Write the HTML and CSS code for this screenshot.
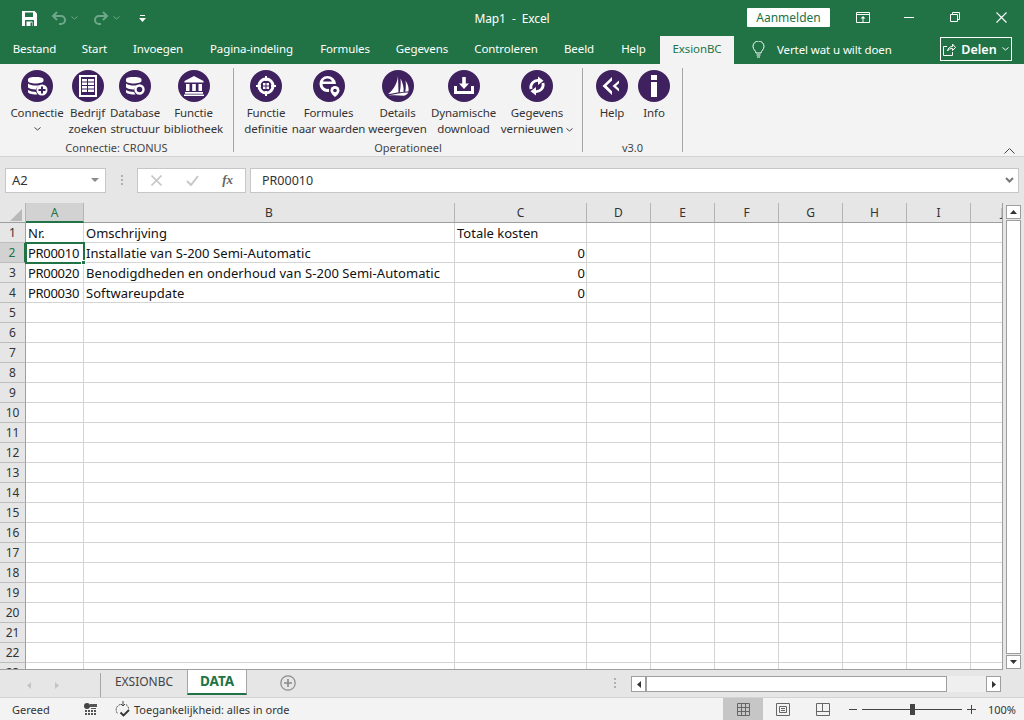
FILE: index.html
```html
<!DOCTYPE html>
<html lang="nl">
<head>
    <meta charset="UTF-8">
    <title>Map1 - Excel</title>
    <link rel="stylesheet" href="styles.css">
</head>
<body>
<div class="app">
    <div class="titlebar">
        <div class="qat">
            <svg class="qat-save" width="15" height="15" viewBox="0 0 15 15"><path d="M0 0h12.500L15 2.500V15H0z" fill="#fff"/><path d="M3 1.500h8v4.500H3zM3 9h9v6H3z" fill="#217346"/><path d="M4.500 10.500h6V15h-6z" fill="#fff"/><path d="M8.500 11.500h1.500V15H8.500z" fill="#217346"/></svg>
            <svg class="qat-undo" width="16" height="14" viewBox="0 0 16 14"><path d="M6 1 2 5l4 4M2.500 5H10a4 4 0 0 1 0 8H8" fill="none" stroke="#6fa78a" stroke-width="2"/></svg>
            <svg class="qat-caret" width="7" height="4" viewBox="0 0 7 4"><path d="M.5.500l3 2.500 3-2.500" fill="none" stroke="#6fa78a"/></svg>
            <svg class="qat-redo" width="16" height="14" viewBox="0 0 16 14"><path d="M10 1l4 4-4 4M13.500 5H6a4 4 0 0 0 0 8h2" fill="none" stroke="#6fa78a" stroke-width="2"/></svg>
            <svg class="qat-caret" width="7" height="4" viewBox="0 0 7 4"><path d="M.5.500l3 2.500 3-2.500" fill="none" stroke="#6fa78a"/></svg>
            <svg class="qat-more" width="7" height="7" viewBox="0 0 7 7"><path d="M1 0h5v1H1zM0 3h7L3.500 7z" fill="#fff"/></svg>
        </div>
        <div class="doc-title">Map1 &nbsp;-&nbsp; Excel</div>
        <div class="win-controls">
            <button class="signin">Aanmelden</button>
            <svg class="win-display" width="14" height="11" viewBox="0 0 14 11"><path d="M.5.500h13v10H.5zM.5 2.500h13" fill="none" stroke="#fff"/><path d="M7 4 4.500 6.500h2V10h1V6.500h2z" fill="#fff"/></svg>
            <svg class="win-min" width="10" height="1" viewBox="0 0 10 1"><path d="M0 0h10v1H0z" fill="#fff"/></svg>
            <svg class="win-restore" width="10" height="10" viewBox="0 0 10 10"><path d="M.5 2.500h7v7h-7zM2.500 2.500v-2h7v7h-2" fill="none" stroke="#fff"/></svg>
            <svg class="win-close" width="11" height="11" viewBox="0 0 11 11"><path d="M.5.500l10 10M10.500.500l-10 10" fill="none" stroke="#fff" stroke-width="1.100"/></svg>
        </div>
    </div>

    <div class="tabs">
        <span class="tab">Bestand</span>
        <span class="tab">Start</span>
        <span class="tab">Invoegen</span>
        <span class="tab">Pagina-indeling</span>
        <span class="tab">Formules</span>
        <span class="tab">Gegevens</span>
        <span class="tab">Controleren</span>
        <span class="tab">Beeld</span>
        <span class="tab">Help</span>
        <span class="tab tab-active">ExsionBC</span>
        <div class="tell-me">
            <svg width="13" height="17" viewBox="0 0 13 17"><path d="M4 12c0-2-3-3.500-3-6.500a5.500 5.500 0 0 1 11 0c0 3-3 4.500-3 6.500zM4.500 14h4M5 16h3" fill="none" stroke="#fff"/></svg>
            <span>Vertel wat u wilt doen</span>
        </div>
        <div class="share">
            <svg width="13" height="13" viewBox="0 0 13 13"><path d="M4 3.500H.5v9h9V9M4.500 8c.5-3 2.500-4.500 5-4.500V1l3 3.500-3 3V5.500C7.500 5.500 5.500 6 4.500 8z" fill="none" stroke="#fff"/></svg>
            <span>Delen</span>
            <svg width="7" height="4" viewBox="0 0 7 4"><path d="M.5.500l3 2.500 3-2.500" fill="none" stroke="#fff"/></svg>
        </div>
    </div>

    <div class="ribbon">
        <div class="group group-conn">
            <div class="group-btns">
                <div class="rb w-conn">
                    <svg class="rb-icon" viewBox="0 0 32 32"><circle cx="16" cy="16" r="16"/><path d="M7 9.500C7 7.500 11 7 14.500 7s8 .5 8 2.500v1.500c0 1.500-4 2.500-8 2.500S7 12.500 7 11zM7 13.500c2 1.500 5 2 7.500 2 1.500 0 3-.2 4.500-.6-2 .8-3.500 2.500-3.800 4.500-.2 0-.5 0-.7 0-3 0-6-.7-7.500-2zM7 20c2 1.300 5 2 8 2 .3 1 .8 1.800 1.500 2.500-.7.100-1.300.100-2 .100-3.500 0-7.500-1-7.500-2.500z" fill="#fff"/><circle cx="21" cy="20" r="5.500" fill="#fff"/><path d="M20 16.500h2v2.500h2.500v2H22v2.500h-2V21h-2.500v-2H20z"/></svg>
                    <span>Connectie</span>
                    <svg class="chev chev-block" width="7" height="4" viewBox="0 0 7 4"><path d="M.5.500l3 2.500 3-2.500" fill="none" stroke="#444"/></svg>
                </div>
                <div class="rb w-bedrijf">
                    <svg class="rb-icon" viewBox="0 0 32 32"><circle cx="16" cy="16" r="16"/><path d="M7 5h18v22H7z" fill="#fff"/><path d="M9 7h14v18H9z"/><path d="M10 9h5v2.500h-5zM16 9h6v2.500h-6zM10 12.500h5V15h-5zM16 12.500h6V15h-6zM10 16h5v2.500h-5zM16 16h6v2.500h-6zM10 19.500h5V22h-5zM16 19.500h6V22h-6z" fill="#fff"/></svg>
                    <span>Bedrijf<br>zoeken</span>
                </div>
                <div class="rb w-db">
                    <svg class="rb-icon" viewBox="0 0 32 32"><circle cx="16" cy="16" r="16"/><path d="M7 9.500C7 7.500 11 7 14.500 7s8 .5 8 2.500v1.500c0 1.500-4 2.500-8 2.500S7 12.500 7 11zM7 13.500c2 1.500 5 2 7.500 2 1.500 0 3-.2 4.500-.6-2 .8-3.500 2.500-3.800 4.500-.2 0-.5 0-.7 0-3 0-6-.7-7.500-2zM7 20c2 1.300 5 2 8 2 .3 1 .8 1.800 1.500 2.500-.7.100-1.300.100-2 .100-3.500 0-7.500-1-7.500-2.500z" fill="#fff"/><circle cx="20.500" cy="19.500" r="4" fill="none" stroke="#fff" stroke-width="2.400"/></svg>
                    <span>Database<br>structuur</span>
                </div>
                <div class="rb w-bib">
                    <svg class="rb-icon" viewBox="0 0 32 32"><circle cx="16" cy="16" r="16"/><path d="M16 6l9.500 5v1.500h-19V11zM8 14h3.500v7H8zM14.200 14h3.600v7h-3.600zM20.500 14H24v7h-3.500zM7 22h18v1.800H7zM6 24.500h20V26H6z" fill="#fff"/></svg>
                    <span>Functie<br>bibliotheek</span>
                </div>
            </div>
            <div class="group-label">Connectie: CRONUS</div>
        </div>
        <div class="sep"></div>

        <div class="group group-oper">
            <div class="group-btns">
                <div class="rb w-def">
                    <svg class="rb-icon" viewBox="0 0 32 32"><circle cx="16" cy="16" r="16"/><circle cx="16" cy="16" r="7" fill="none" stroke="#fff" stroke-width="3"/><path d="M15 6h2v5h-2zM15 21h2v5h-2zM6 15h5v2H6zM21 15h5v2h-5z" fill="#fff"/><path d="M13 13h2.500v2.500H13zM16.500 13H19v2.500h-2.500zM13 16.500h2.500V19H13zM16.500 16.500H19V19h-2.500z" fill="#fff"/></svg>
                    <span>Functie<br>definitie</span>
                </div>
                <div class="rb w-form">
                    <svg class="rb-icon" viewBox="0 0 32 32"><circle cx="16" cy="16" r="16"/><path d="M14.500 6a8.500 8.500 0 0 1 8.500 8H9.500a5 5 0 0 0 5 5c.5 0 1 0 1.500-.2v3.100c-.5.100-1 .1-1.500.1a8 8 0 0 1 0-16zM9.800 11.500H19a5 5 0 0 0-9.200 0z" fill="#fff"/><path d="M22 16a4.500 4.500 0 0 1 4.500 4.500c0 3-4.500 6.500-4.500 6.500s-4.500-3.500-4.500-6.500A4.500 4.500 0 0 1 22 16z" fill="#fff"/><circle cx="22" cy="20.500" r="1.800"/></svg>
                    <span>Formules<br>naar waarden</span>
                </div>
                <div class="rb w-details">
                    <svg class="rb-icon" viewBox="0 0 32 32"><circle cx="16" cy="16" r="16"/><path d="M16 5.500C15.800 12 12 19.500 6 24c4-.5 7.500-1.300 10.500-1.800zM18.500 8.500c2.500 4.500 3.500 9.500 3 13.500l-3.800.3c1-4.500 1.300-9.300.8-13.800zM23.500 10.500c2.500 3.500 3.500 7.500 3 10.800l-3.200.5c.6-3.700.8-7.500.2-11.300zM6 25.500c7-1.500 14-2.800 20.500-3-1 1.500-2.500 3-4.500 3.200-5-.6-10.500-.8-16-.2z" fill="#fff"/></svg>
                    <span>Details<br>weergeven</span>
                </div>
                <div class="rb w-dyn">
                    <svg class="rb-icon" viewBox="0 0 32 32"><circle cx="16" cy="16" r="16"/><path d="M14.200 7h3.600v6.500H21l-5 5.500-5-5.500h3.200zM6 16h3v5h14v-5h3v8H6z" fill="#fff"/></svg>
                    <span>Dynamische<br>download</span>
                </div>
                <div class="rb w-geg">
                    <svg class="rb-icon" viewBox="0 0 32 32"><circle cx="16" cy="16" r="16"/><path d="M10 19a7 7 0 0 1 8-8.500" fill="none" stroke="#fff" stroke-width="2.800"/><path d="M17 6.500l5.500 4.300-5.500 4.200z" fill="#fff"/><path d="M22 13a7 7 0 0 1-8 8.500" fill="none" stroke="#fff" stroke-width="2.800"/><path d="M15 25.500l-5.500-4.300 5.500-4.200z" fill="#fff"/></svg>
                    <span>Gegevens<br>vernieuwen <svg class="chev" width="7" height="4" viewBox="0 0 7 4"><path d="M.5.500l3 2.500 3-2.500" fill="none" stroke="#444"/></svg></span>
                </div>
            </div>
            <div class="group-label">Operationeel</div>
        </div>
        <div class="sep"></div>

        <div class="group group-ver">
            <div class="group-btns">
                <div class="rb w-help">
                    <svg class="rb-icon" viewBox="0 0 32 32"><circle cx="16" cy="16" r="16"/><path d="M16 7v3.500L10.500 15.800l5.500 5.500V25L6.500 16zM23 10.500v2.800l-3 2.700 3 2.700v2.800L16.500 16z" fill="#fff"/></svg>
                    <span>Help</span>
                </div>
                <div class="rb w-info">
                    <svg class="rb-icon" viewBox="0 0 32 32"><circle cx="16" cy="16" r="16"/><path d="M13 5h6v5h-6zM13 12h6v15h-6z" fill="#fff"/></svg>
                    <span>Info</span>
                </div>
            </div>
            <div class="group-label">v3.0</div>
        </div>
        <div class="sep"></div>

        <svg class="collapse" width="11" height="6" viewBox="0 0 11 6"><path d="M.5 5.500l5-5 5 5" fill="none" stroke="#444"/></svg>
    </div>

    <div class="formula-row">
        <div class="namebox">
            <span>A2</span>
            <svg width="8" height="4" viewBox="0 0 8 4"><path d="M0 0h8L4 4z" fill="#8a8a8a"/></svg>
        </div>
        <div class="fx-dots"><i></i><i></i><i></i></div>
        <div class="fx-btns">
            <svg width="11" height="11" viewBox="0 0 11 11"><path d="M.5.500l10 10M10.500.500l-10 10" fill="none" stroke="#c8c8c8" stroke-width="1.600"/></svg>
            <svg width="13" height="11" viewBox="0 0 13 11"><path d="M1 6l4 4 7-9" fill="none" stroke="#c8c8c8" stroke-width="2"/></svg>
            <span class="fx-label">fx</span>
        </div>
        <div class="fx-input">
            <span>PR00010</span>
            <svg width="9" height="6" viewBox="0 0 9 6"><path d="M1 1l3.500 3.500L8 1" fill="none" stroke="#777" stroke-width="2"/></svg>
        </div>
    </div>

    <div class="sheet-area">
        <div class="grid-wrap">
            <table class="grid">
                <colgroup>
                    <col class="c-row"><col class="c-a"><col class="c-b"><col class="c-c">
                    <col class="c-n"><col class="c-n"><col class="c-n"><col class="c-n"><col class="c-n"><col class="c-n"><col class="c-n">
                </colgroup>
                <tr class="head">
                    <th class="corner"><span class="corner-mark"></span></th>
                    <th class="col-on">A</th><th>B</th><th>C</th><th>D</th><th>E</th><th>F</th><th>G</th><th>H</th><th>I</th><th>J</th>
                </tr>
                <tr><th class="rh">1</th><td>Nr.</td><td>Omschrijving</td><td>Totale kosten</td><td></td><td></td><td></td><td></td><td></td><td></td><td></td></tr>
                <tr><th class="rh row-on">2</th><td class="code active">PR00010</td><td class="desc">Installatie van S-200 Semi-Automatic</td><td class="num">0</td><td></td><td></td><td></td><td></td><td></td><td></td><td></td></tr>
                <tr><th class="rh">3</th><td class="code">PR00020</td><td class="desc">Benodigdheden en onderhoud van S-200 Semi-Automatic</td><td class="num">0</td><td></td><td></td><td></td><td></td><td></td><td></td><td></td></tr>
                <tr><th class="rh">4</th><td class="code">PR00030</td><td class="desc">Softwareupdate</td><td class="num">0</td><td></td><td></td><td></td><td></td><td></td><td></td><td></td></tr>
                <tr><th class="rh">5</th><td></td><td></td><td></td><td></td><td></td><td></td><td></td><td></td><td></td><td></td></tr>
                <tr><th class="rh">6</th><td></td><td></td><td></td><td></td><td></td><td></td><td></td><td></td><td></td><td></td></tr>
                <tr><th class="rh">7</th><td></td><td></td><td></td><td></td><td></td><td></td><td></td><td></td><td></td><td></td></tr>
                <tr><th class="rh">8</th><td></td><td></td><td></td><td></td><td></td><td></td><td></td><td></td><td></td><td></td></tr>
                <tr><th class="rh">9</th><td></td><td></td><td></td><td></td><td></td><td></td><td></td><td></td><td></td><td></td></tr>
                <tr><th class="rh">10</th><td></td><td></td><td></td><td></td><td></td><td></td><td></td><td></td><td></td><td></td></tr>
                <tr><th class="rh">11</th><td></td><td></td><td></td><td></td><td></td><td></td><td></td><td></td><td></td><td></td></tr>
                <tr><th class="rh">12</th><td></td><td></td><td></td><td></td><td></td><td></td><td></td><td></td><td></td><td></td></tr>
                <tr><th class="rh">13</th><td></td><td></td><td></td><td></td><td></td><td></td><td></td><td></td><td></td><td></td></tr>
                <tr><th class="rh">14</th><td></td><td></td><td></td><td></td><td></td><td></td><td></td><td></td><td></td><td></td></tr>
                <tr><th class="rh">15</th><td></td><td></td><td></td><td></td><td></td><td></td><td></td><td></td><td></td><td></td></tr>
                <tr><th class="rh">16</th><td></td><td></td><td></td><td></td><td></td><td></td><td></td><td></td><td></td><td></td></tr>
                <tr><th class="rh">17</th><td></td><td></td><td></td><td></td><td></td><td></td><td></td><td></td><td></td><td></td></tr>
                <tr><th class="rh">18</th><td></td><td></td><td></td><td></td><td></td><td></td><td></td><td></td><td></td><td></td></tr>
                <tr><th class="rh">19</th><td></td><td></td><td></td><td></td><td></td><td></td><td></td><td></td><td></td><td></td></tr>
                <tr><th class="rh">20</th><td></td><td></td><td></td><td></td><td></td><td></td><td></td><td></td><td></td><td></td></tr>
                <tr><th class="rh">21</th><td></td><td></td><td></td><td></td><td></td><td></td><td></td><td></td><td></td><td></td></tr>
                <tr><th class="rh">22</th><td></td><td></td><td></td><td></td><td></td><td></td><td></td><td></td><td></td><td></td></tr>
                <tr><th class="rh">23</th><td></td><td></td><td></td><td></td><td></td><td></td><td></td><td></td><td></td><td></td></tr>
            </table>
        </div>
        <div class="vscroll">
            <div class="sb-btn"><svg width="7" height="4" viewBox="0 0 7 4"><path d="M3.500 0L7 4H0z" fill="#333"/></svg></div>
            <div class="sb-thumb"></div>
            <div class="sb-btn"><svg width="7" height="4" viewBox="0 0 7 4"><path d="M0 0h7L3.500 4z" fill="#333"/></svg></div>
        </div>
    </div>

    <div class="sheetbar">
        <div class="sheet-nav">
            <svg width="4" height="7" viewBox="0 0 4 7"><path d="M4 0v7L0 3.500z" fill="#c4c4c4"/></svg>
            <svg width="4" height="7" viewBox="0 0 4 7"><path d="M0 0v7l4-3.500z" fill="#c4c4c4"/></svg>
        </div>
        <div class="sheet-tab">EXSIONBC</div>
        <div class="sheet-tab sheet-tab-on">DATA</div>
        <svg class="sheet-add" width="16" height="16" viewBox="0 0 16 16"><circle cx="8" cy="8" r="7.200" fill="none" stroke="#8a8a8a" stroke-width="1.200"/><path d="M7.200 4h1.600v3.200H12v1.600H8.800V12H7.200V8.800H4V7.200h3.200z" fill="#8a8a8a"/></svg>
        <div class="fx-dots bar-dots"><i></i><i></i><i></i></div>
        <div class="hscroll">
            <div class="hb"><svg width="4" height="7" viewBox="0 0 4 7"><path d="M4 0v7L0 3.500z" fill="#333"/></svg></div>
            <div class="hb-thumb"></div>
            <div class="hb-track"></div>
            <div class="hb"><svg width="4" height="7" viewBox="0 0 4 7"><path d="M0 0v7l4-3.500z" fill="#333"/></svg></div>
        </div>
    </div>

    <div class="statusbar">
        <span class="st-ready">Gereed</span>
        <svg class="st-macro" width="13" height="13" viewBox="0 0 13 13"><circle cx="3" cy="3" r="3" fill="#444"/><path d="M6 1h7v3H6zM1 7h2v2H1zM4 7h2v2H4zM7 7h2v2H7zM10 7h2v2h-2zM1 10h2v2H1zM4 10h2v2H4zM7 10h2v2H7zM10 10h2v2h-2zM7 5h5v1H7z" fill="#555"/></svg>
        <svg class="st-access" width="16" height="17" viewBox="0 0 16 17"><path d="M5.500 3.500A5.500 5.500 0 0 0 3 13M11 3.500c1.500 1 2.500 2.500 2.500 4" fill="none" stroke="#444" stroke-dasharray="2 1"/><path d="M8 0v5M6 3l2 2 2-2" fill="none" stroke="#444"/><path d="M5.500 11.500l3 3 5.500-5.500" fill="none" stroke="#333" stroke-width="1.800"/></svg>
        <span class="st-access-text">Toegankelijkheid: alles in orde</span>
        <div class="st-right">
            <div class="view view-on"><svg width="13" height="13" viewBox="0 0 13 13"><path d="M.5.500h12v12H.5zM.5 4.500h12M.5 8.500h12M4.500.500v12M8.500.500v12" fill="none" stroke="#666"/></svg></div>
            <div class="view"><svg width="14" height="13" viewBox="0 0 14 13"><path d="M.5.500h13v12H.5zM3.500 3.500h7v6h-7zM5 5.500h4M5 7.500h4" fill="none" stroke="#666"/></svg></div>
            <div class="view"><svg width="14" height="13" viewBox="0 0 14 13"><path d="M.5.500h13v12H.5zM.5 8.500h13M6.500.500v8" fill="none" stroke="#666"/></svg></div>
            <svg class="zoom-minus" width="8" height="1" viewBox="0 0 8 1"><path d="M0 0h8v1H0z" fill="#444"/></svg>
            <div class="zoom-track"><span class="zoom-thumb"></span></div>
            <svg class="zoom-plus" width="9" height="9" viewBox="0 0 9 9"><path d="M4 0h1v4h4v1H5v4H4V5H0V4h4z" fill="#444"/></svg>
            <span class="zoom-value">100%</span>
        </div>
    </div>
</div>
</body>
</html>
```

FILE: styles.css
```css
html, body {
    margin: 0;
    padding: 0;
}

body {
    background-color: #e6e6e6;
    font-family: "Noto Sans", "Open Sans", sans-serif;
    font-size: 12px;
    color: #333;
    overflow: hidden;
}

.app {
    width: 1024px;
    height: 720px;
    display: flex;
    flex-direction: column;
    overflow: hidden;
}

/* title bar */
.titlebar {
    height: 36px;
    background-color: #217346;
    color: #fff;
    display: grid;
    grid-template-columns: 1fr auto 1fr;
    align-items: center;
}

.qat {
    display: flex;
    align-items: center;
    padding-left: 22px;
}

.qat-undo { margin-left: 14px; }
.qat-redo { margin-left: 15px; }
.qat-caret { margin-left: 4px; }
.qat-more { margin-left: 19px; }

.doc-title {
    font-size: 12px;
    letter-spacing: -0.1px;
}

.win-controls {
    display: flex;
    align-items: center;
    justify-content: flex-end;
    padding-bottom: 2px;
}

.signin {
    width: 83px;
    height: 19px;
    padding: 0;
    margin-right: 26px;
    border: none;
    border-radius: 1px;
    background-color: #fff;
    color: #217346;
    font-family: inherit;
    font-size: 12px;
    cursor: pointer;
}

.win-display { margin-right: 34px; }
.win-min { margin-right: 36px; }
.win-restore { margin-right: 36px; }
.win-close { margin-right: 17px; }

/* ribbon tabs */
.tabs {
    height: 28px;
    background-color: #217346;
    color: #fff;
    display: grid;
    grid-template-columns: 69px 51px 76px 111px 76px 78px 90px 56px 53px 74px auto 1fr;
    font-size: 11.5px;
}

.tab {
    text-align: center;
    line-height: 26px;
    letter-spacing: -0.1px;
}

.tab-active {
    background-color: #f3f3f3;
    color: #217346;
}

.tell-me {
    display: flex;
    align-items: center;
    gap: 12px;
    margin-left: 18px;
    letter-spacing: -0.1px;
    padding-bottom: 2px;
}

.share {
    justify-self: end;
    margin-right: 12px;
    margin-top: 1px;
    width: 70px;
    height: 22px;
    border: 1px solid #fff;
    display: flex;
    align-items: center;
    justify-content: center;
    gap: 5px;
    font-weight: 600;
    font-size: 12.5px;
}

/* ribbon */
.ribbon {
    height: 92px;
    background-color: #f3f3f3;
    border-bottom: 1px solid #d2d2d2;
    display: flex;
    flex-shrink: 0;
    position: relative;
}

.group {
    height: 92px;
    display: flex;
    flex-direction: column;
    justify-content: space-between;
}

.group-conn { width: 233px; padding-left: 10px; box-sizing: border-box; }
.group-oper { width: 348px; padding-left: 10px; box-sizing: border-box; }
.group-ver { width: 99px; padding-left: 16px; box-sizing: border-box; }

.group-btns {
    display: flex;
    gap: 5px;
    padding-top: 6px;
}

.group-label {
    text-align: center;
    font-size: 11px;
    height: 15px;
    line-height: 14px;
    color: #444;
}

.group-conn .group-label { padding-right: 10px; }
.group-oper .group-label { padding-right: 10px; }
.group-ver .group-label { padding-right: 16px; }

.sep {
    width: 1px;
    height: 84px;
    margin-top: 4px;
    background-color: #a6a6a6;
}

.rb {
    display: flex;
    flex-direction: column;
    align-items: center;
    text-align: center;
    font-size: 11.5px;
    letter-spacing: -0.1px;
    line-height: 16px;
    color: #333;
    white-space: nowrap;
}

.rb-icon {
    width: 32px;
    height: 32px;
    margin-bottom: 3px;
    fill: #40215f;
}

.w-conn { width: 54px; }
.w-bedrijf { width: 37px; }
.w-db { width: 48px; }
.w-bib { width: 59px; }
.w-def { width: 44px; }
.w-form { width: 71px; }
.w-details { width: 57px; }
.w-dyn { width: 65px; }
.w-geg { width: 72px; }
.w-help { width: 26px; }
.w-info { width: 22px; margin-left: 13px; }

.chev {
    vertical-align: middle;
}

.chev-block {
    margin-top: 6px;
}

.collapse {
    position: absolute;
    right: 9px;
    bottom: 2px;
}

/* formula bar */
.formula-row {
    height: 46px;
    display: flex;
    align-items: center;
    background-color: #e6e6e6;
    padding-left: 5px;
    box-sizing: border-box;
    flex-shrink: 0;
}

.namebox {
    width: 101px;
    height: 25px;
    box-sizing: border-box;
    background-color: #fff;
    border: 1px solid #c6c6c6;
    display: flex;
    align-items: center;
    justify-content: space-between;
    padding: 0 6px;
    font-size: 13px;
}

.fx-dots {
    width: 31px;
    display: flex;
    flex-direction: column;
    align-items: center;
    gap: 2px;
}

.fx-dots i {
    width: 2px;
    height: 2px;
    background-color: #b0b0b0;
}

.fx-btns {
    width: 109px;
    height: 25px;
    box-sizing: border-box;
    background-color: #fff;
    border: 1px solid #c6c6c6;
    display: flex;
    align-items: center;
    justify-content: space-between;
    padding: 0 12px 0 13px;
}

.fx-label {
    font-family: "Liberation Serif", serif;
    font-style: italic;
    font-weight: 700;
    font-size: 13px;
    color: #666;
}

.fx-input {
    width: 769px;
    height: 25px;
    margin-left: 4px;
    box-sizing: border-box;
    background-color: #fff;
    border: 1px solid #c6c6c6;
    display: flex;
    align-items: center;
    justify-content: space-between;
    padding: 0 4px 0 11px;
    font-size: 12.5px;
}

/* sheet */
.sheet-area {
    height: 467px;
    display: flex;
    background-color: #e6e6e6;
    flex-shrink: 0;
}

.grid-wrap {
    width: 1003px;
    height: 467px;
    overflow: hidden;
    border-right: 1px solid #9e9e9e;
    border-bottom: 1px solid #9e9e9e;
    box-sizing: border-box;
}

.grid {
    table-layout: fixed;
    width: 1035px;
    border-collapse: separate;
    border-spacing: 0;
    background-color: #fff;
}

.c-row { width: 26px; }
.c-a { width: 58px; }
.c-b { width: 371px; }
.c-c { width: 132px; }
.c-n { width: 64px; }

.grid tr {
    height: 20px;
}

.grid th {
    height: 20px;
    padding: 0;
    box-sizing: border-box;
    font-weight: 400;
    font-size: 12px;
    color: #333;
    background-color: #e6e6e6;
    border-right: 1px solid #bdbdbd;
    text-align: center;
    overflow: hidden;
}

.head th {
    border-bottom: 1px solid #9e9e9e;
    border-right: 1px solid #b4b4b4;
}

.rh {
    border-bottom: 1px solid #bdbdbd;
    border-right: 1px solid #9e9e9e !important;
}

.corner {
    position: relative;
}

.corner-mark {
    position: absolute;
    right: 3px;
    bottom: 1px;
    width: 0;
    height: 0;
    border-left: 12px solid transparent;
    border-bottom: 12px solid #b9b9b9;
}

.head .col-on {
    background-color: #d2d2d2;
    color: #217346;
    border-bottom: 2px solid #217346;
}

.grid .row-on {
    background-color: #d2d2d2;
    color: #217346;
    border-right: 2px solid #217346 !important;
}

.grid td {
    height: 20px;
    padding: 0 2px;
    box-sizing: border-box;
    border-right: 1px solid #d4d4d4;
    border-bottom: 1px solid #d4d4d4;
    font-size: 13px;
    color: #111;
    white-space: nowrap;
    overflow: hidden;
}

.grid td.num {
    text-align: right;
    padding-right: 1px;
}

.grid td.code {
    letter-spacing: -0.3px;
}

.grid td.desc {
    letter-spacing: 0.06px;
}

.grid td.active {
    position: relative;
    overflow: visible;
    outline: 2px solid #217346;
    outline-offset: -1px;
}

.grid td.active::after {
    content: "";
    position: absolute;
    right: -3px;
    bottom: -3px;
    width: 5px;
    height: 5px;
    background-color: #217346;
    border: 1px solid #fff;
    box-sizing: border-box;
}

.vscroll {
    width: 21px;
    display: flex;
    flex-direction: column;
    padding: 2px 3px 1px 3px;
    box-sizing: border-box;
    gap: 1px;
}

.sb-btn {
    height: 14px;
    background-color: #fff;
    border: 1px solid #9e9e9e;
    box-sizing: border-box;
    display: flex;
    align-items: center;
    justify-content: center;
    flex-shrink: 0;
}

.sb-thumb {
    flex: 1;
    background-color: #fff;
    border: 1px solid #9e9e9e;
}

/* sheet tabs and scrollbar */
.sheetbar {
    height: 28px;
    background-color: #e6e6e6;
    border-bottom: 1px solid #d2d2d2;
    box-sizing: border-box;
    display: flex;
    align-items: flex-start;
    flex-shrink: 0;
}

.sheet-nav {
    width: 101px;
    height: 24px;
    box-sizing: border-box;
    margin-top: 3px;
    border-right: 1px solid #a6a6a6;
    display: flex;
    align-items: center;
    gap: 24px;
    padding-left: 27px;
}

.sheet-tab {
    width: 86px;
    height: 24px;
    box-sizing: border-box;
    text-align: center;
    line-height: 24px;
    color: #444;
    font-size: 12px;
}

.sheet-tab-on {
    width: 60px;
    height: 25px;
    background-color: #fff;
    border: 1px solid #a6a6a6;
    border-top: none;
    border-bottom: 2px solid #217346;
    color: #217346;
    font-weight: 700;
    font-size: 13.5px;
    line-height: 23px;
}

.sheet-add {
    margin: 5px 0 0 33px;
}

.bar-dots {
    width: 16px;
    margin: 8px 0 0 311px;
}

.hscroll {
    width: 370px;
    height: 16px;
    margin: 6px 0 0 8px;
    display: flex;
}

.hb {
    width: 15px;
    height: 16px;
    box-sizing: border-box;
    background-color: #fff;
    border: 1px solid #9e9e9e;
    display: flex;
    align-items: center;
    justify-content: center;
    flex-shrink: 0;
}

.hb-thumb {
    width: 301px;
    box-sizing: border-box;
    background-color: #fff;
    border: 1px solid #9e9e9e;
}

.hb-track {
    flex: 1;
    background-color: #efefef;
}

/* status bar */
.statusbar {
    flex: 1;
    background-color: #f3f3f3;
    display: flex;
    align-items: center;
    font-size: 11px;
    color: #333;
}

.st-ready { width: 84px; padding-left: 12px; box-sizing: border-box; }
.st-access { margin-left: 18px; }
.st-access-text { margin-left: 3px; }

.st-right {
    margin-left: auto;
    height: 100%;
    display: flex;
    align-items: center;
}

.view {
    width: 40px;
    height: 100%;
    display: flex;
    align-items: center;
    justify-content: center;
}

.view-on { background-color: #c6c6c6; }

.zoom-minus { margin-left: 6px; }

.zoom-track {
    width: 100px;
    height: 1px;
    margin: 0 5px;
    background-color: #444;
    position: relative;
}

.zoom-thumb {
    position: absolute;
    left: 48px;
    top: -5px;
    width: 5px;
    height: 11px;
    background-color: #444;
}

.zoom-value {
    width: 48px;
    text-align: right;
    padding-right: 8px;
    box-sizing: border-box;
}
```
